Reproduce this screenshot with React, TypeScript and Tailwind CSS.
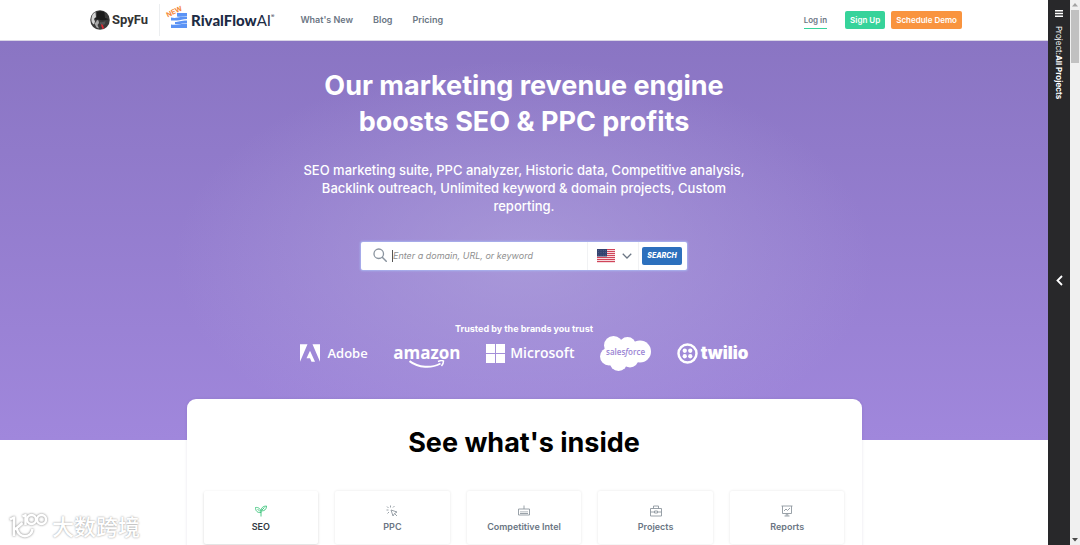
import { useState, type ReactNode } from "react";
import clsx from "clsx";

const navLinks = ["What's New", "Blog", "Pricing"];

function SpyFuLogo() {
  return (
    <a href="#" className="flex items-center gap-[2px] text-[#333]">
      <svg viewBox="0 0 40 40" className="h-5 w-5 shrink-0" aria-hidden="true">
        <circle cx="20" cy="20" r="19.5" fill="#3a3a3a" />
        <path d="M3 17c0-7 4-11 8-13l1 10-4 4 2 5-2 6C4 27 2 22 3 17z" fill="#d4d4d4" />
        <path d="M14 4c4-2 11-2 15 1l1 11c3 0 5 1 7 3-8 2-20 2-28-1 1-2 3-3 5-3z" fill="#1c1c1c" />
        <path d="M14 20l3 1 1 5-3 4 3 7-5-2-4-8 3-3z" fill="#a9a9a9" />
        <path d="M20 24c4 1 8 0 11-2l-1 6-5 3-5-3z" fill="#555" />
        <path d="M22 28l4 2 2 7-3 1-2-5z" fill="#e02b35" />
      </svg>
      <span className="font-['Roboto',sans-serif] text-[13px] font-bold leading-5">SpyFu</span>
    </a>
  );
}

function RivalFlowLogo() {
  return (
    <a href="#" className="relative flex items-center text-[#1c2b45]">
      <svg viewBox="0 0 32 30" className="h-[15px] w-4 shrink-0" aria-hidden="true">
        <path d="M12 0h20v6c-7-1-12 3-20 1z" fill="#5b93f5" />
        <path d="M0 9c8 2 14 0 19-1s9-1 13-1v5c-9 0-13 3-20 3H0z" fill="#5b93f5" />
        <path d="M8 18c6 0 12-3 24-3v5c-7 0-12 3-24 2z" fill="#5b93f5" />
        <path d="M0 23c12 2 18-2 32-2v9H0z" fill="#5b93f5" />
      </svg>
      <span className="ml-1 font-['Lato',sans-serif] text-[15px] leading-5">
        <b className="font-black">RivalFlow</b>AI
      </span>
      <span className="self-start text-[5px] leading-[13px]">®</span>
      <span className="absolute -left-[5px] -top-[2px] -rotate-[25deg] text-[7px] font-bold leading-2 text-[#f58a3c]">
        NEW
      </span>
    </a>
  );
}

function Header() {
  return (
    <header className="relative flex h-[41px] items-center border-b border-[#d9d5e6] bg-white pl-[90px] pr-[86px] text-[#6b7684]">
      <SpyFuLogo />
      <span className="ml-[11px] mr-[11px] h-8 w-px bg-[#eceef0]" />
      <RivalFlowLogo />
      <nav className="ml-[26px] flex gap-5 text-[9px] font-semibold">
        {navLinks.map((label) => (
          <a key={label} href="#">
            {label}
          </a>
        ))}
      </nav>
      <div className="ml-auto flex items-center text-[8px] font-semibold leading-3">
        <a href="#" className="mt-[3px] border-b border-[#36d39a] pb-[2px]">
          Log in
        </a>
        <button className="ml-[18px] h-[18px] rounded-[2px] bg-[#36d39a] px-[5px] text-white">Sign Up</button>
        <button className="ml-[6px] h-[18px] rounded-[2px] bg-[#f9943f] px-[5px] text-white">Schedule Demo</button>
      </div>
    </header>
  );
}

function UsFlag() {
  return (
    <svg viewBox="0 0 36 28" className="h-[14px] w-[18px]" aria-hidden="true">
      <rect width="36" height="28" fill="#fff" />
      {[0, 4, 8, 12, 16, 20, 24].map((y) => (
        <rect key={y} y={y} width="36" height="2.4" fill="#d0455a" />
      ))}
      <rect width="20" height="15" fill="#33436f" />
      {[3, 7.5, 12].map((y) =>
        [3, 8, 13, 17].map((x) => <circle key={`${x}-${y}`} cx={x} cy={y} r="0.6" fill="#aab3d0" />),
      )}
    </svg>
  );
}

function SearchBar() {
  return (
    <form
      onSubmit={(e) => e.preventDefault()}
      className="mx-auto mt-[27px] flex h-7 w-[326px] items-center rounded-[2px] bg-white pr-[5px] shadow-[0_0_2px_1px_#a9b5f0]"
    >
      <svg viewBox="0 0 28 28" className="-mt-[2px] ml-3 h-[14px] w-[14px] shrink-0" fill="none" stroke="#8a949f" aria-hidden="true">
        <circle cx="11.5" cy="11.5" r="9.5" strokeWidth="2.6" />
        <path d="M18.5 18.5l8 8" strokeWidth="3" strokeLinecap="round" />
      </svg>
      <span className="ml-[5px] h-3 w-px bg-[#555]" />
      <input
        type="text"
        aria-label="Domain, URL, or keyword"
        placeholder="Enter a domain, URL, or keyword"
        className="min-w-0 flex-1 text-[9px] italic text-[#333] outline-none placeholder:text-[#8f8f8f]"
      />
      <label className="relative flex h-full w-[52px] items-center gap-[7px] border-x border-[#f1f2f4] pl-[9px]">
        <UsFlag />
        <svg viewBox="0 0 20 12" className="h-[6px] w-[10px]" fill="none" stroke="#6b7684" strokeWidth="2.6" aria-hidden="true">
          <path d="M1.5 1.5L10 10l8.5-8.5" />
        </svg>
        <select aria-label="Country" className="absolute inset-0 opacity-0">
          <option>US</option>
          <option>UK</option>
        </select>
      </label>
      <button type="submit" className="ml-[3px] h-[18px] w-10 rounded-[2px] bg-[#2c70bd] text-[7px] font-extrabold italic text-white">
        SEARCH
      </button>
    </form>
  );
}

function Brands() {
  return (
    <div className="mx-auto flex h-9 w-[449px] items-center justify-between text-white">
      <div className="flex items-center gap-2">
        <svg viewBox="0 0 40 35" className="h-[18px] w-5" fill="currentColor" aria-hidden="true">
          <path d="M0 0h15L0 35zM25 0h15v35zM20 13l10 22h-7l-3-7h-7z" />
        </svg>
        <span className="font-['Open_Sans',sans-serif] text-[13px] font-semibold leading-5">Adobe</span>
      </div>
      <div className="flex flex-col items-center">
        <span className="mt-[5px] font-['Open_Sans',sans-serif] text-[17px] font-bold leading-5">amazon</span>
        <svg viewBox="0 0 72 18" className="-mt-[3px] h-[9px] w-9" fill="none" stroke="currentColor" aria-hidden="true">
          <path d="M1 2c18 14 44 15 62 5" strokeWidth="4" />
          <path d="M58 3c5-2 9-2 11-1 0 3-1 7-4 10" strokeWidth="3" />
        </svg>
      </div>
      <div className="flex items-center gap-[5px]">
        <svg viewBox="0 0 19 19" className="h-[19px] w-[19px]" fill="currentColor" aria-hidden="true">
          <path d="M0 0h9v9H0zM10 0h9v9h-9zM0 10h9v9H0zM10 10h9v9h-9z" />
        </svg>
        <span className="font-['Open_Sans',sans-serif] text-[14px] font-semibold leading-5">Microsoft</span>
      </div>
      <div className="relative flex h-9 w-[51px] items-center justify-center">
        <svg viewBox="0 0 102 72" className="absolute inset-0 h-full w-full" fill="currentColor" aria-hidden="true">
          <circle cx="27" cy="21" r="19" />
          <circle cx="55" cy="21" r="17" />
          <circle cx="80" cy="33" r="22" />
          <circle cx="18" cy="43" r="18" />
          <circle cx="37" cy="54" r="18" />
          <circle cx="60" cy="48" r="17" />
          <path d="M25 20h45v32H25z" />
        </svg>
        <span className="relative -mt-[3px] font-['Open_Sans',sans-serif] text-[8px] font-semibold leading-3 text-[#9a84d4]">
          sales<i>f</i>orce
        </span>
      </div>
      <div className="flex items-center gap-[3px]">
        <svg viewBox="0 0 42 42" className="h-[21px] w-[21px]" fill="currentColor" aria-hidden="true">
          <circle cx="21" cy="21" r="18" fill="none" stroke="currentColor" strokeWidth="5" />
          <circle cx="15.5" cy="15.5" r="4.3" />
          <circle cx="26.5" cy="15.5" r="4.3" />
          <circle cx="15.5" cy="26.5" r="4.3" />
          <circle cx="26.5" cy="26.5" r="4.3" />
        </svg>
        <span className="text-[17px] font-black leading-5">twilio</span>
      </div>
    </div>
  );
}

function Hero() {
  return (
    <section className="bg-[radial-gradient(ellipse_350px_200px_at_50%_55%,rgba(180,168,222,0.6),rgba(180,168,222,0)),linear-gradient(#8a75c3,#a087dc)] pb-[69px] pt-[27px] text-center text-white">
      <h1 className="mx-auto max-w-[440px] text-[27px] font-bold leading-9">
        Our marketing revenue engine boosts SEO &amp; PPC profits
      </h1>
      <p className="mx-auto mt-[21px] max-w-[460px] text-[13px] font-medium leading-[18px]">
        SEO marketing suite, PPC analyzer, Historic data, Competitive analysis, Backlink outreach, Unlimited keyword
        &amp; domain projects, Custom reporting.
      </p>
      <SearchBar />
      <p className="mt-[53px] text-[9px] font-bold leading-3">Trusted by the brands you trust</p>
      <Brands />
    </section>
  );
}

const features: { label: string; icon: ReactNode }[] = [
  {
    label: "SEO",
    icon: (
      <>
        <path d="M12 23V13M12 15C5 16 1 12 1 5c6-1 11 3 11 10zM12 12c0-6 4-10 11-10 0 7-4 10-11 10z" />
        <path d="M5 8l5 5M19 5l-5 5" />
      </>
    ),
  },
  {
    label: "PPC",
    icon: (
      <path d="M10 10l12 4-5 3-3 5zM17 17l5 5M9 1v4M2 3l3 3M1 10h4M3 17l3-3M14 5l3-3" />
    ),
  },
  {
    label: "Competitive Intel",
    icon: <path d="M1 8h22v12H1zM12 1v7M4 17h16M6 12v3M10 12v3M14 12v3M18 12v3" />,
  },
  {
    label: "Projects",
    icon: <path d="M1 7h22v15H1zM7 7V2h10v5M1 14h8M15 14h8M9 12h6v4H9z" />,
  },
  {
    label: "Reports",
    icon: <path d="M1 2h22M3 2v15h18V2M6 12l4-4 3 3 5-5M12 17v3M7 22h10M9 20h6" />,
  },
];

function Inside() {
  const [active, setActive] = useState("SEO");

  return (
    <section className="relative mx-auto -mt-[41px] w-full max-w-[675px] rounded-t-[9px] bg-white px-[17px] pb-5 pt-[26px] shadow-[0_0_3px_rgba(60,40,110,0.12)]">
      <h2 className="text-center text-[27px] font-bold leading-9 text-black">See what's inside</h2>
      <div role="tablist" className="mt-[30px] grid grid-cols-5 gap-[17px]">
        {features.map(({ label, icon }) => (
          <button
            key={label}
            role="tab"
            aria-selected={active === label}
            onClick={() => setActive(label)}
            className={clsx(
              "flex h-[53px] flex-col items-center justify-center gap-1 rounded-[2px] bg-white pt-[2px] text-[9px] font-semibold leading-3",
              active === label
                ? "text-[#333a44] shadow-[0_1px_3px_rgba(0,0,0,0.16)]"
                : "text-[#6b7684] shadow-[0_0_3px_rgba(0,0,0,0.11)]",
            )}
          >
            <svg
              viewBox="0 0 24 24"
              fill="none"
              stroke="currentColor"
              strokeWidth="1.8"
              className={clsx("h-3 w-3", active === label ? "text-[#3cc47c]" : "text-[#8e979f]")}
              aria-hidden="true"
            >
              {icon}
            </svg>
            {label}
          </button>
        ))}
      </div>
    </section>
  );
}

function ProjectRail() {
  return (
    <aside className="relative flex w-[22px] shrink-0 flex-col items-center bg-[#28282a] pt-[10px] text-white">
      <button aria-label="Menu">
        <svg viewBox="0 0 8 7" className="h-[7px] w-2" fill="currentColor" aria-hidden="true">
          <path d="M0 0h8v1.6H0zM0 2.7h8v1.6H0zM0 5.4h8V7H0z" />
        </svg>
      </button>
      <p className="mt-[9px] text-[8px] leading-3 [writing-mode:vertical-rl]">
        Project:<b>All Projects</b>
      </p>
      <button aria-label="Expand panel" className="absolute inset-x-0 top-1/2 flex justify-center pt-[2px]">
        <svg viewBox="0 0 7 11" className="h-[11px] w-[7px]" fill="none" stroke="currentColor" strokeWidth="1.8" aria-hidden="true">
          <path d="M6 1L1.5 5.5 6 10" />
        </svg>
      </button>
    </aside>
  );
}

function ScrollTrack() {
  return (
    <div className="flex w-[10px] shrink-0 flex-col items-center bg-[#f0f0f0] py-[3px]" aria-hidden="true">
      <svg viewBox="0 0 6 4" className="h-1 w-[6px]">
        <path d="M3 0l3 3.5H0z" fill="#a3a3a3" />
      </svg>
      <div className="mt-[3px] h-[53px] w-2 bg-[#c1c1c1]" />
      <svg viewBox="0 0 6 4" className="mt-auto h-1 w-[6px]">
        <path d="M0 0h6L3 3.5z" fill="#4a4a4a" />
      </svg>
    </div>
  );
}

function Watermark() {
  return (
    <div className="absolute bottom-1 left-[9px] flex items-center gap-1 text-white">
      <svg
        viewBox="0 0 78 54"
        className="h-[27px] w-[39px] drop-shadow-[0_0_1px_rgba(0,0,0,0.5)]"
        fill="none"
        stroke="currentColor"
        strokeWidth="5"
        strokeLinejoin="round"
        aria-hidden="true"
      >
        <path d="M2 15l8-4v37M27 22L12 35M16 34c3 19 29 19 31 0" />
        <path d="M27 9l6-3v20" />
        <circle cx="45" cy="15" r="9" />
        <circle cx="65" cy="15" r="9" />
      </svg>
      <span className="font-['Noto_Sans_CJK_SC',sans-serif] text-[22px] font-medium leading-8 [text-shadow:0_0_2px_rgba(0,0,0,0.45)]">
        大数跨境
      </span>
    </div>
  );
}

export default function App() {
  return (
    <div className="relative flex h-screen overflow-hidden bg-white font-['Inter',sans-serif]">
      <main className="min-w-0 flex-1 overflow-hidden">
        <Header />
        <Hero />
        <Inside />
      </main>
      <ProjectRail />
      <ScrollTrack />
      <Watermark />
    </div>
  );
}
